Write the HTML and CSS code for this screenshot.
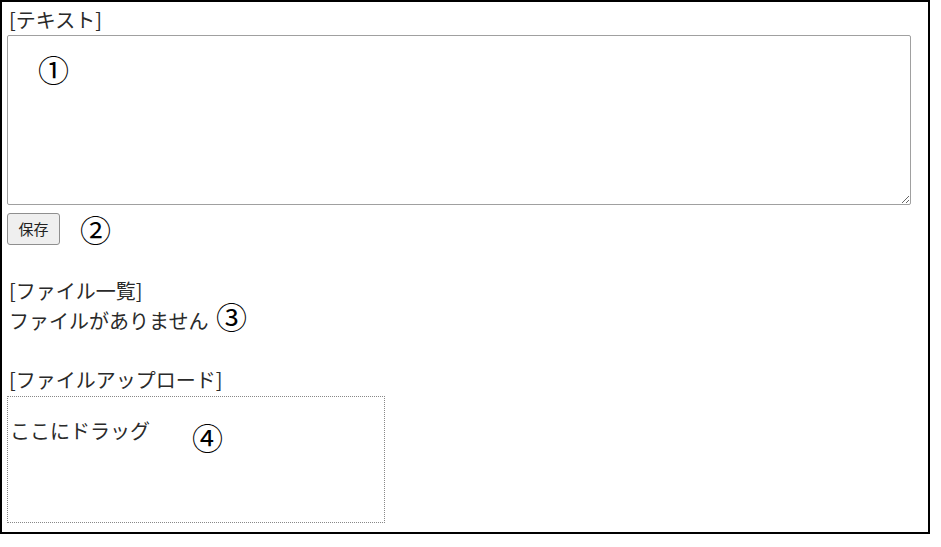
FILE: index.html
```html
<!DOCTYPE html>
<html lang="ja">
<head>
<meta charset="utf-8">
<link rel="stylesheet" href="styles.css">
</head>
<body>
<div class="frame">
  <div class="label">[テキスト]</div>
  <textarea class="text-input"></textarea>
  <div class="btn-row"><button class="save">保存</button></div>
  <div class="section">
    <div class="label">[ファイル一覧]</div>
    <div class="label">ファイルがありません</div>
  </div>
  <div class="section">
    <div class="label">[ファイルアップロード]</div>
    <div class="dropzone">ここにドラッグ</div>
  </div>
  <span class="mark m1">①</span>
  <span class="mark m2">②</span>
  <span class="mark m3">③</span>
  <span class="mark m4">④</span>
</div>
</body>
</html>
```

FILE: styles.css
```css
html, body {
  margin: 0;
  padding: 0;
  background: #fff;
}
.frame {
  position: relative;
  box-sizing: border-box;
  width: 930px;
  height: 534px;
  border: 2px solid #000;
  padding: 3px 0 0 5px;
  font-family: "Noto Sans CJK JP", "Noto Sans", sans-serif;
  font-size: 20px;
  color: #2a2a2a;
}
.label {
  line-height: 30px;
  height: 30px;
  padding-left: 2px;
}
.text-input {
  display: block;
  box-sizing: border-box;
  width: 904px;
  height: 170px;
  margin: 0;
  border: 1px solid #a0a0a0;
  border-radius: 2px;
  resize: both;
}
.btn-row {
  margin-top: 7px;
  height: 33px;
}
.save {
  box-sizing: border-box;
  width: 53px;
  height: 32px;
  margin: 0;
  padding: 0;
  font-family: "Noto Sans CJK JP", sans-serif;
  font-size: 15px;
  color: #222;
  background: #efefef;
  border: 1px solid #8f8f8f;
  border-radius: 3px;
}
.section {
  margin-top: 31px;
}
.section + .section {
  margin-top: 29px;
}
.dropzone {
  box-sizing: border-box;
  width: 378px;
  height: 127px;
  margin-top: 1px;
  border: 1px dotted #888;
  padding: 19px 0 0 2px;
  line-height: 30px;
}
.mark {
  position: absolute;
  font-family: "Noto Sans CJK JP", sans-serif;
  font-size: 31px;
  font-weight: 400;
  line-height: 30px;
  color: #000;
}
.m1 { left: 36px; top: 52px; }
.m2 { left: 78px; top: 212px; }
.m3 { left: 214px; top: 299px; }
.m4 { left: 190px; top: 420px; }
```
